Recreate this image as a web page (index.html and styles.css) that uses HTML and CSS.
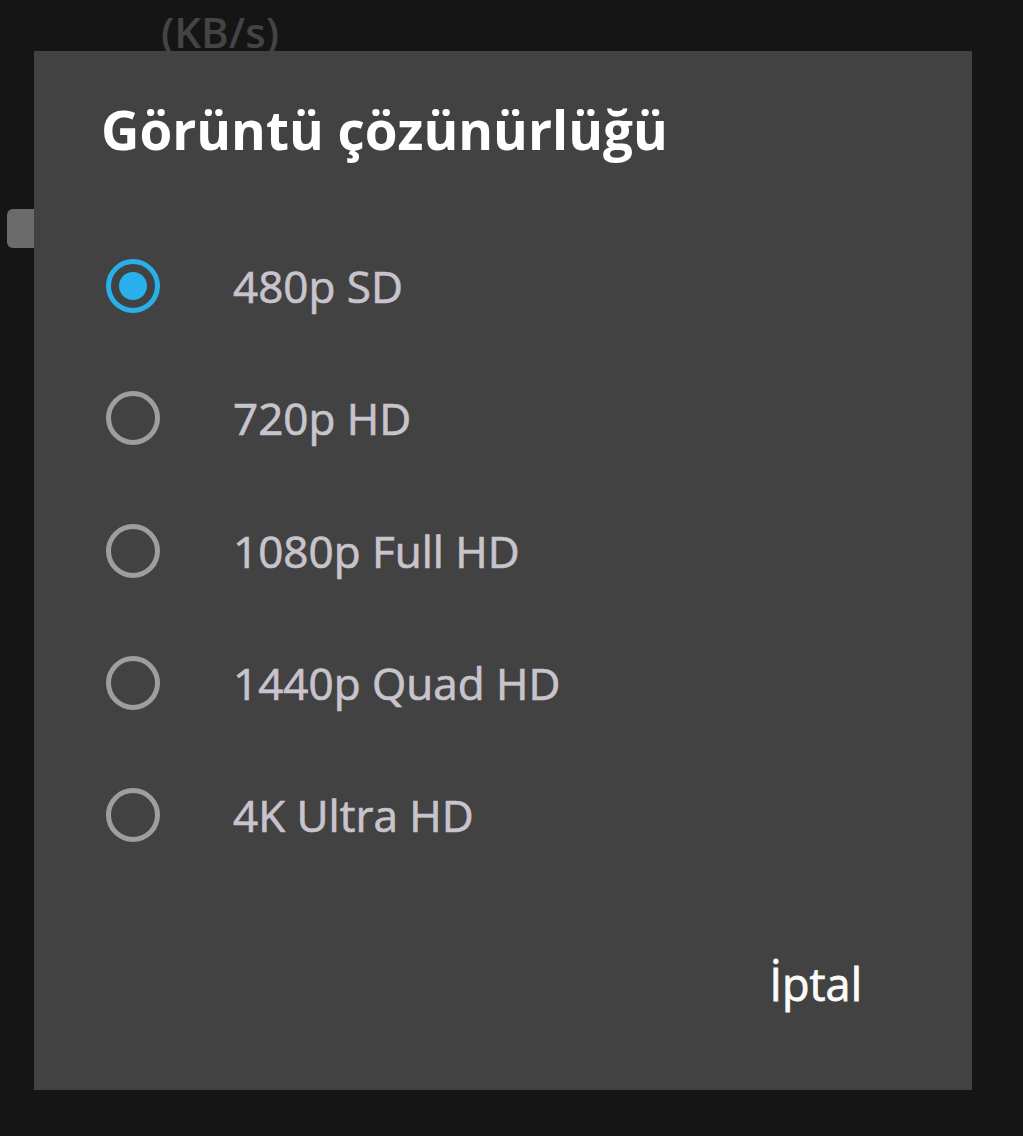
FILE: index.html
```html
<!DOCTYPE html>
<html lang="tr">
<head>
    <meta charset="UTF-8">
    <meta name="viewport" content="width=device-width, initial-scale=1.0">
    <title>Görüntü çözünürlüğü</title>
    <link rel="stylesheet" href="styles.css">
</head>
<body>

    <div class="screen">
        <div class="unit-label">(KB/s)</div>
        <div class="slider-thumb"></div>
    </div>

    <div class="dialog">
        <div class="dialog-title">Görüntü çözünürlüğü</div>

        <div class="option-list">
            <label class="option">
                <span class="radio checked"></span>
                <span class="option-text">480p SD</span>
            </label>
            <label class="option">
                <span class="radio"></span>
                <span class="option-text">720p HD</span>
            </label>
            <label class="option">
                <span class="radio"></span>
                <span class="option-text">1080p Full HD</span>
            </label>
            <label class="option">
                <span class="radio"></span>
                <span class="option-text">1440p Quad HD</span>
            </label>
            <label class="option">
                <span class="radio"></span>
                <span class="option-text">4K Ultra HD</span>
            </label>
        </div>

        <div class="dialog-actions">
            <button type="button" class="cancel-btn">İptal</button>
        </div>
    </div>

</body>
</html>
```

FILE: styles.css
```css
body {
    background: #151515;
    font-family: 'Open Sans', 'Noto Sans', sans-serif;
    margin: 0;
    padding: 0;
    width: 1023px;
    height: 1136px;
    overflow: hidden;
    position: relative;
}

.screen {
    height: 100%;
    position: relative;
}

.unit-label {
    padding: 6px 0 0 161px;
    font-size: 42px;
    font-weight: 600;
    color: #444;
    line-height: 52px;
}

.slider-thumb {
    margin: 151px 0 0 7px;
    width: 40px;
    height: 39px;
    background: #6b6b6b;
    border-radius: 6px;
}

/* dialog sits over the page */
.dialog {
    position: absolute;
    left: 34px;
    top: 51px;
    width: 938px;
    height: 1039px;
    background: #424242;
    box-sizing: border-box;
    padding: 47px 0 0 0;
    display: flex;
    flex-direction: column;
}

.dialog-title {
    padding-left: 67px;
    font-size: 53px;
    font-weight: 700;
    color: #fff;
    line-height: 64px;
}

.option-list {
    margin-top: 58px;
    display: flex;
    flex-direction: column;
}

.option {
    height: 132.3px;
    display: flex;
    align-items: center;
    padding-left: 72px;
}

.radio {
    width: 54px;
    height: 54px;
    box-sizing: border-box;
    border: 5px solid #9e9e9e;
    border-radius: 50%;
    display: flex;
    justify-content: center;
    align-items: center;
    flex-shrink: 0;
}

.radio.checked {
    border-color: #29b0ea;
}

.radio.checked::after {
    content: "";
    width: 28px;
    height: 28px;
    border-radius: 50%;
    background: #29b0ea;
}

.option-text {
    margin-left: 73px;
    font-size: 44px;
    color: #c9c3cd;
    line-height: 56px;
    -webkit-text-stroke: 0.7px #c9c3cd; /* reference text is a bit heavier than regular */
}

.dialog-actions {
    margin-top: auto;
    margin-bottom: 78px;
    display: flex;
    justify-content: flex-end;
    padding-right: 110px;
}

.cancel-btn {
    background: none;
    border: none;
    padding: 0;
    font-family: inherit;
    font-size: 45px;
    color: #fafafa;
    line-height: 56px;
    -webkit-text-stroke: 0.8px #fafafa;
    cursor: pointer;
}
```
